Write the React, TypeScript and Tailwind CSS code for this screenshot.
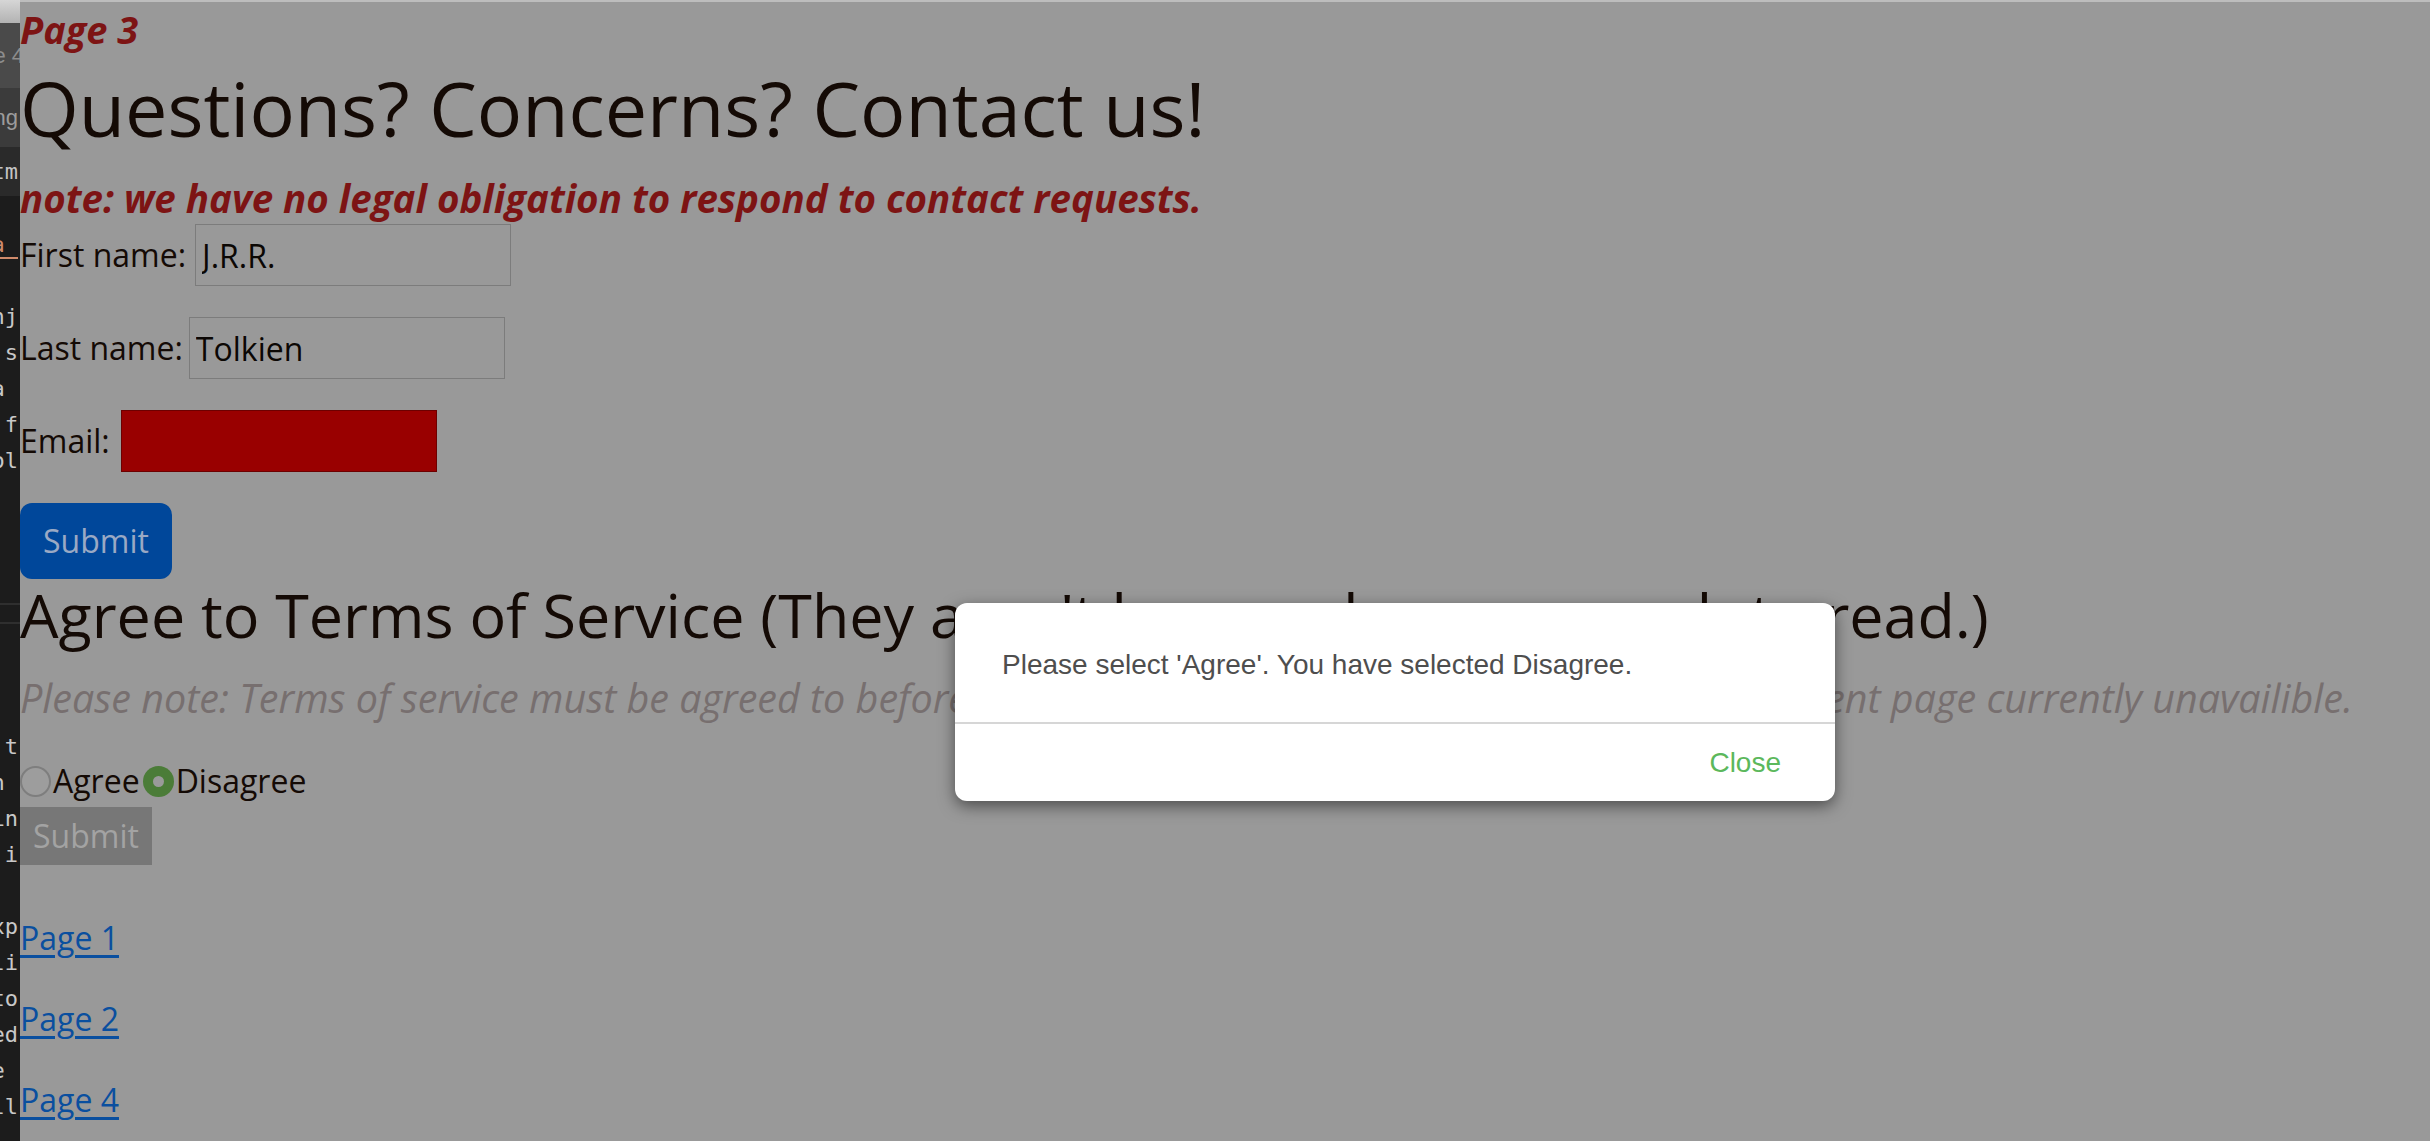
import React from 'react';

const topLines = [
  { text: 'na\u00a0', className: 'text-[#d08b6b] underline decoration-[#d08b6b] decoration-2 underline-offset-[5px]' },
  { text: '' },
  { text: 'nj' },
  { text: 's' },
  { text: 'a\u00a0' },
  { text: 'f' },
  { text: 'ol' },
];

const bottomLines = ['t', 'n\u00a0', 'in', 'i', '', 'xp', 'li', 'to', 'ed', 'e\u00a0', 'll'];

const EditorStrip = () => (
  <aside className="flex w-[20px] shrink-0 flex-col overflow-hidden bg-[#1c1c1c] font-['DejaVu_Sans_Mono',monospace] text-[22px] leading-[36px] text-[#c8c8c8]">
    <div className="h-[23px] shrink-0 bg-gradient-to-b from-[#d6d6d6] to-[#b3b3b3]" />
    <div className="flex h-[65px] shrink-0 items-center justify-end whitespace-nowrap bg-[#4a4a4a] font-['Liberation_Sans',sans-serif] text-[22px] text-[#8d8d8d]">
      <span className="-mr-[4px]">e 4</span>
    </div>
    <div className="flex h-[59px] shrink-0 items-center justify-end whitespace-nowrap bg-[#3b3b3b] font-['Liberation_Sans',sans-serif] text-[22px] text-[#9c9c9c]">
      <span className="pr-[2px]">ng</span>
    </div>
    <div className="flex h-[49px] shrink-0 items-center justify-end whitespace-nowrap bg-[#2a2a2a] text-[#c4c4c4]">
      <span className="pr-[2px]">tm</span>
    </div>
    <div className="mt-[31px] flex flex-col">
      {topLines.map((line, i) => (
        <div key={i} className="flex h-[36px] justify-end whitespace-nowrap pr-[2px]">
          <span className={line.className}>{line.text}</span>
        </div>
      ))}
    </div>
    <div className="mt-[124px] h-[2px] shrink-0 bg-[#2f2f2f]" />
    <div className="mt-[17px] h-[2px] shrink-0 bg-[#2f2f2f]" />
    <div className="mt-[105px] flex flex-col">
      {bottomLines.map((line, i) => (
        <div key={i} className="flex h-[36px] justify-end whitespace-nowrap pr-[2px]">
          {line}
        </div>
      ))}
    </div>
  </aside>
);

const Field = ({ label, value, gap, red }: { label: string; value?: string; gap: string; red?: boolean }) => (
  <div className="flex h-[62px] items-center">
    <label className="leading-[40px]">{label}</label>
    <input
      readOnly
      defaultValue={value}
      className={`${gap} h-[62px] w-[316px] border px-[6px] text-[32px] text-[#0b0704] outline-none ${
        red ? 'border-[#6d0000] bg-[#990000]' : 'border-[#7c7c7c] bg-transparent'
      }`}
    />
  </div>
);

const Radio = ({ checked }: { checked?: boolean }) =>
  checked ? (
    <span className="flex h-[31px] w-[31px] items-center justify-center rounded-full bg-[#4b7c38]">
      <span className="h-[11px] w-[11px] rounded-full bg-[#9a9a9a]" />
    </span>
  ) : (
    <span className="box-border h-[31px] w-[31px] rounded-full border-2 border-[#7e7e7e] bg-[#9d9d9d]" />
  );

const AlertModal = () => (
  <div className="absolute left-[955px] top-[603px] w-[880px] overflow-hidden rounded-[12px] bg-white font-['Liberation_Sans',Arial,sans-serif] shadow-[0_5px_16px_rgba(0,0,0,0.5)]">
    <div className="flex h-[119px] items-center px-[47px] pt-[5px] text-[28px] text-[#4e4e4e]">
      Please select 'Agree'. You have selected Disagree.
    </div>
    <div className="h-[2px] bg-[#d6d6d6]" />
    <div className="flex h-[77px] items-center justify-end pr-[54px]">
      <button className="text-[28px] text-[#5cb85c]">Close</button>
    </div>
  </div>
);

export default function App() {
  return (
    <div className="relative flex h-[1141px] w-full overflow-hidden bg-[#999999] font-['Open_Sans',sans-serif]">
      <EditorStrip />
      <main className="flex min-w-0 flex-1 flex-col border-t-2 border-[#bdbdbd] text-[32px] text-[#140a05]">
        <h3 className="mt-[7px] h-[40px] text-[38px] font-bold italic leading-[40px] text-[#7d1414]">Page 3</h3>
        <h1 className="mt-[14px] h-[90px] whitespace-nowrap text-[75.5px] leading-[90px]">Questions? Concerns? Contact us!</h1>
        <h4 className="mt-[23px] h-[44px] whitespace-nowrap text-[38.5px] font-bold italic leading-[44px] text-[#7d1414]">
          note: we have no legal obligation to respond to contact requests.
        </h4>

        <form className="flex flex-col">
          <div className="mt-[4px]">
            <Field label="First name:" value="J.R.R." gap="ml-[9px]" />
          </div>
          <div className="mt-[31px]">
            <Field label="Last name:" value="Tolkien" gap="ml-[6px]" />
          </div>
          <div className="mt-[31px]">
            <Field label="Email:" gap="ml-[11px]" red />
          </div>
          <button
            type="button"
            className="mt-[31px] h-[76px] w-[152px] rounded-[12px] bg-[#00479a] text-[32px] text-[#9aa9c4]"
          >
            Submit
          </button>
        </form>

        <h2 className="mt-[1px] h-[70px] whitespace-nowrap text-[61px] leading-[70px]">
          Agree to Terms of Service (They aren't long and easy enough to read.)
        </h2>
        <p className="mt-[26px] h-[44px] whitespace-nowrap text-[39.5px] italic leading-[44px] text-[#776f6f]">
          Please note: Terms of service must be agreed to before proceeding to the next step of registration. Payment page currently unavailible.
        </p>

        <div className="mt-[41px] flex h-[40px] items-center leading-[40px]">
          <Radio />
          <span className="ml-[2px]">Agree</span>
          <span className="ml-[3px]">
            <Radio checked />
          </span>
          <span className="ml-[2px]">Disagree</span>
        </div>
        <button type="button" className="mt-[6px] h-[58px] w-[132px] bg-[#777777] text-[32px] text-[#a3a3a3]">
          Submit
        </button>

        <nav className="flex flex-col items-start">
          {['Page 1', 'Page 2', 'Page 4'].map((page, i) => (
            <a
              key={page}
              href="#"
              className={`${i === 0 ? 'mt-[53px]' : 'mt-[41px]'} h-[40px] leading-[40px] text-[#0a4f9f] underline decoration-[3px] underline-offset-[5px]`}
            >
              {page}
            </a>
          ))}
        </nav>
      </main>
      <AlertModal />
    </div>
  );
}
